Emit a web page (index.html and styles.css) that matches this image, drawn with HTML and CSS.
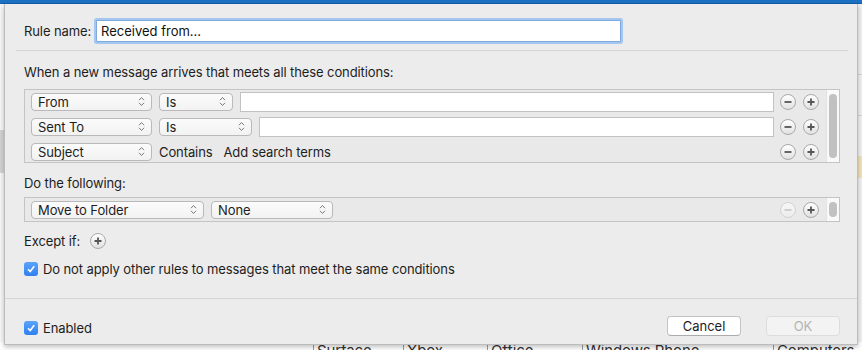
FILE: index.html
```html
<!DOCTYPE html>
<html lang="en">
<head>
  <meta charset="UTF-8" />
  <meta name="viewport" content="width=device-width, initial-scale=1.0"/>
  <title>Rules</title>
  <link rel="stylesheet" href="styles.css">
</head>
<body>

  <div class="titlebar"></div>
  <div class="app">
    <div class="side-left"><div class="sel"></div></div>
    <div class="app-main"></div>
    <div class="side-right"><div class="line"></div><div class="line"></div><div class="hl"></div></div>
  </div>
  <div class="tabs">
    <span class="tab t1">Surface</span>
    <span class="tab t2">Xbox</span>
    <span class="tab t3">Office</span>
    <span class="tab t4">Windows Phone</span>
    <span class="tab t5">Computers</span>
  </div>

  <div class="sheet">
    <div class="name-row">
      <label class="name-label">Rule name:</label>
      <input class="name-input" type="text" value="Received from...">
    </div>
    <div class="sep"></div>

    <p class="heading">When a new message arrives that meets all these conditions:</p>
    <div class="list">
      <div class="rows">
        <div class="row">
          <div class="popup w-field">From <svg class="chev" width="7" height="11" viewBox="0 0 7 11"><path d="M1 4.2 L3.5 1.5 L6 4.2 M1 6.8 L3.5 9.5 L6 6.8"/></svg></div>
          <div class="popup w-is">Is <svg class="chev" width="7" height="11" viewBox="0 0 7 11"><path d="M1 4.2 L3.5 1.5 L6 4.2 M1 6.8 L3.5 9.5 L6 6.8"/></svg></div>
          <input class="field" type="text">
          <div class="btns">
            <span class="circle"><svg width="10" height="10" viewBox="0 0 10 10"><path d="M1.5 5 H8.5"/></svg></span>
            <span class="circle"><svg width="10" height="10" viewBox="0 0 10 10"><path d="M1.5 5 H8.5 M5 1.5 V8.5"/></svg></span>
          </div>
        </div>
        <div class="row">
          <div class="popup w-field">Sent To <svg class="chev" width="7" height="11" viewBox="0 0 7 11"><path d="M1 4.2 L3.5 1.5 L6 4.2 M1 6.8 L3.5 9.5 L6 6.8"/></svg></div>
          <div class="popup w-is2">Is <svg class="chev" width="7" height="11" viewBox="0 0 7 11"><path d="M1 4.2 L3.5 1.5 L6 4.2 M1 6.8 L3.5 9.5 L6 6.8"/></svg></div>
          <input class="field" type="text">
          <div class="btns">
            <span class="circle"><svg width="10" height="10" viewBox="0 0 10 10"><path d="M1.5 5 H8.5"/></svg></span>
            <span class="circle"><svg width="10" height="10" viewBox="0 0 10 10"><path d="M1.5 5 H8.5 M5 1.5 V8.5"/></svg></span>
          </div>
        </div>
        <div class="row">
          <div class="popup w-field">Subject <svg class="chev" width="7" height="11" viewBox="0 0 7 11"><path d="M1 4.2 L3.5 1.5 L6 4.2 M1 6.8 L3.5 9.5 L6 6.8"/></svg></div>
          <span class="plain">Contains</span>
          <span class="plain search">Add search terms</span>
          <div class="spacer"></div>
          <div class="btns">
            <span class="circle"><svg width="10" height="10" viewBox="0 0 10 10"><path d="M1.5 5 H8.5"/></svg></span>
            <span class="circle"><svg width="10" height="10" viewBox="0 0 10 10"><path d="M1.5 5 H8.5 M5 1.5 V8.5"/></svg></span>
          </div>
        </div>
      </div>
      <div class="scroll"><div class="thumb"></div></div>
    </div>

    <p class="heading heading-do">Do the following:</p>
    <div class="list list-do">
      <div class="rows">
        <div class="row">
          <div class="popup w-action">Move to Folder <svg class="chev" width="7" height="11" viewBox="0 0 7 11"><path d="M1 4.2 L3.5 1.5 L6 4.2 M1 6.8 L3.5 9.5 L6 6.8"/></svg></div>
          <div class="popup w-folder">None <svg class="chev" width="7" height="11" viewBox="0 0 7 11"><path d="M1 4.2 L3.5 1.5 L6 4.2 M1 6.8 L3.5 9.5 L6 6.8"/></svg></div>
          <div class="spacer"></div>
          <div class="btns">
            <span class="circle disabled"><svg width="10" height="10" viewBox="0 0 10 10"><path d="M1.5 5 H8.5"/></svg></span>
            <span class="circle"><svg width="10" height="10" viewBox="0 0 10 10"><path d="M1.5 5 H8.5 M5 1.5 V8.5"/></svg></span>
          </div>
        </div>
      </div>
      <div class="scroll"><div class="thumb"></div></div>
    </div>

    <div class="except">
      <span>Except if:</span>
      <span class="circle"><svg width="10" height="10" viewBox="0 0 10 10"><path d="M1.5 5 H8.5 M5 1.5 V8.5"/></svg></span>
    </div>

    <div class="check-row">
      <span class="check"><svg width="10" height="10" viewBox="0 0 10 10"><path d="M2 5.3 L4.2 7.6 L8.2 2.2"/></svg></span>
      <span>Do not apply other rules to messages that meet the same conditions</span>
    </div>

    <div class="sep sep-full"></div>

    <div class="footer">
      <div class="check-row enabled">
        <span class="check"><svg width="10" height="10" viewBox="0 0 10 10"><path d="M2 5.3 L4.2 7.6 L8.2 2.2"/></svg></span>
        <span>Enabled</span>
      </div>
      <div class="spacer"></div>
      <button class="btn">Cancel</button>
      <button class="btn btn-ok" disabled>OK</button>
    </div>
  </div>

</body>
</html>
```

FILE: styles.css
```css
* {
  box-sizing: border-box;
}

body {
  margin: 0;
  width: 862px;
  height: 350px;
  overflow: hidden;
  position: relative;
  background: #f4f4f4;
  font-family: Inter, "Noto Sans", sans-serif;
  font-size: 13px;
  letter-spacing: -0.1px;
  color: #1d1d1d;
}

/* background app */
.titlebar {
  height: 4px;
  background: #1c71c4;
  border-bottom: 1px solid #155fa9;
}

.app {
  display: flex;
  height: 338px;
}

.side-left {
  width: 4px;
  background: #f7f7f7;
  padding-top: 126px;
}

.side-left .sel {
  height: 43px;
  background: #d3d3d3;
}

.app-main {
  flex: 1;
}

.side-right {
  width: 5px;
  background: #f1f1f1;
  border-left: 1px solid #cfcfcf;
  padding-top: 70px;
}

.side-right .line {
  height: 1px;
  background: #d6d6d6;
  margin-bottom: 40px;
}

.side-right .hl {
  height: 22px;
  margin-top: 36px;
  background: #f1e2bd;
}

.tabs {
  display: flex;
  padding-left: 313px;
  font-size: 15px;
  line-height: 18px;
  color: #333;
  background: #fff;
}

.tab {
  border-left: 1px solid #9a9a9a;
  padding-left: 3px;
}

.t1 { width: 90px; }
.t2 { width: 84px; }
.t3 { width: 95px; }
.t4 { width: 191px; }

/* sheet */
.sheet {
  position: absolute;
  left: 4px;
  top: 4px;
  width: 854px;
  height: 341px;
  background: #ececec;
  border: 1px solid #bcbcbc;
  border-top: none;
  box-shadow: 0 2px 5px rgba(0, 0, 0, 0.25);
  padding: 0 17px 0 19px;
}

.name-row {
  display: flex;
  align-items: center;
  height: 26px;
  margin-top: 14px;
}

.name-label {
  width: 72px;
}

.name-input {
  width: 525px;
  height: 22px;
  border: 1px solid #7fa9da;
  box-shadow: 0 0 0 2px #a3c7f1;
  border-radius: 1px;
  padding: 0 4px;
  font: inherit;
  color: #111;
  background: #fff;
  outline: none;
}

.sep {
  height: 1px;
  background: #d5d5d5;
  margin: 6px -8px 0 -8px;
}

.heading {
  margin: 13px 0 9px;
  line-height: 16px;
}

.list {
  display: flex;
  border: 1px solid #c4c4c4;
  background: #e9e9e9;
}

.rows {
  flex: 1;
  display: flex;
  flex-direction: column;
  gap: 6px;
  padding: 2px 7px 1px 6px;
}

.row {
  display: flex;
  align-items: center;
  gap: 7px;
  height: 19px;
}

.popup {
  display: flex;
  align-items: center;
  justify-content: space-between;
  height: 18px;
  padding: 0 6px 0 6px;
  border: 1px solid #b9b9b9;
  border-radius: 4px;
  background: linear-gradient(#fbfbfb, #f2f2f2);
  line-height: 16px;
}

.chev path {
  fill: none;
  stroke: #7a7a7a;
  stroke-width: 1;
}

.w-field { width: 121px; }
.w-is { width: 74px; }
.w-is2 { width: 93px; }
.w-action { width: 173px; }
.w-folder { width: 122px; }

.field {
  flex: 1;
  height: 20px;
  border: 1px solid #c2c2c2;
  background: #fff;
  font: inherit;
  outline: none;
}

.plain.search {
  margin-left: 4px;
}

.spacer {
  flex: 1;
}

.btns {
  display: flex;
  gap: 7px;
  margin-left: -1px;
}

.circle {
  display: inline-flex;
  align-items: center;
  justify-content: center;
  width: 16px;
  height: 16px;
  border-radius: 50%;
  border: 1px solid #a9a9a9;
  background: linear-gradient(#ffffff, #e1e1e1);
}

.circle path {
  stroke: #565656;
  stroke-width: 1.8;
}

.circle.disabled {
  border-color: #d2d2d2;
  background: linear-gradient(#f6f6f6, #ececec);
}

.circle.disabled path {
  stroke: #cbcbcb;
}

.scroll {
  width: 13px;
  background: #f9f9f9;
  border-left: 1px solid #e3e3e3;
  padding: 4px 2px 4px 2px;
}

.thumb {
  height: 100%;
  width: 8px;
  border-radius: 4px;
  background: #c1c1c1;
}

.heading-do {
  margin: 12px 0 6px;
}

.list-do .rows {
  padding: 2px 7px 2px 6px;
}

.except {
  display: flex;
  align-items: center;
  gap: 10px;
  height: 18px;
  margin-top: 10px;
}

.check-row {
  display: flex;
  align-items: center;
  gap: 5px;
  height: 16px;
  margin-top: 11px;
}

.check {
  display: inline-flex;
  align-items: center;
  justify-content: center;
  width: 14px;
  height: 14px;
  border-radius: 3px;
  background: linear-gradient(#5ba4fa, #2f80f0);
}

.check path {
  fill: none;
  stroke: #fff;
  stroke-width: 1.6;
}

.sep-full {
  margin: 21px -17px 0 -19px;
}

.footer {
  display: flex;
  align-items: flex-start;
  margin-top: 17px;
}

.enabled {
  margin-top: 4px;
}

.btn {
  width: 74px;
  height: 20px;
  margin-left: 25px;
  border: 1px solid #c3c3c3;
  border-bottom-color: #acacac;
  border-radius: 4px;
  background: #fff;
  font: inherit;
  color: #1d1d1d;
  padding: 0;
}

.btn-ok {
  background: #f3f3f3;
  border-color: #dcdcdc;
  color: #b3b3b3;
}
```
